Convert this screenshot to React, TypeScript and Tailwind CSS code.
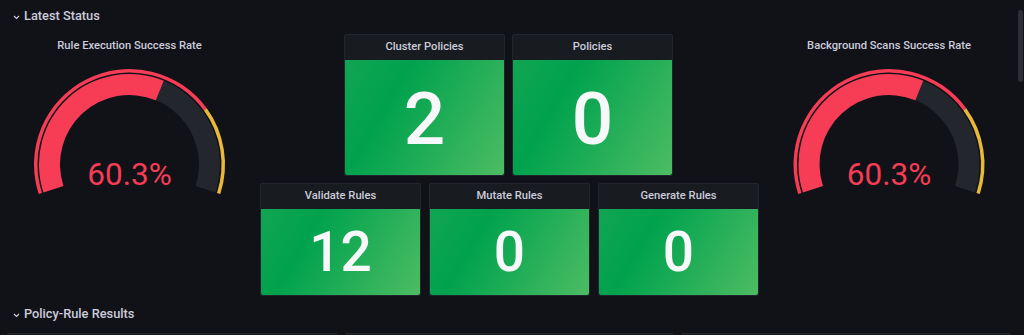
import React from "react";

const RED = "#f73c56";
const YELLOW = "#eab839";
const TRACK = "#23262c";

const polar = (cx: number, cy: number, r: number, deg: number) => {
  const a = (deg * Math.PI) / 180;
  return [cx + r * Math.cos(a), cy - r * Math.sin(a)];
};

// ring segment from angle a0 down to a1 (math degrees, clockwise on screen)
const band = (cx: number, cy: number, r1: number, r2: number, a0: number, a1: number) => {
  const large = a0 - a1 > 180 ? 1 : 0;
  const [x0, y0] = polar(cx, cy, r2, a0);
  const [x1, y1] = polar(cx, cy, r2, a1);
  const [x2, y2] = polar(cx, cy, r1, a1);
  const [x3, y3] = polar(cx, cy, r1, a0);
  return `M${x0} ${y0} A${r2} ${r2} 0 ${large} 1 ${x1} ${y1} L${x2} ${y2} A${r1} ${r1} 0 ${large} 0 ${x3} ${y3}Z`;
};

const START = 198;
const SPAN = 216;
const angleAt = (pct: number) => START - (pct / 100) * SPAN;

const Chevron = () => (
  <svg width="7" height="5" viewBox="0 0 7 5" className="mr-[4px] mt-[2px]">
    <polyline points="1,1 3.5,3.5 6,1" fill="none" stroke="#ccccdc" strokeWidth="1.2" />
  </svg>
);

const RowHeader = ({ title, className }: { title: string; className?: string }) => (
  <div className={`flex items-center pl-[13px] ${className ?? ""}`}>
    <Chevron />
    <span className="text-[12.8px] font-medium text-[#ccccdc]">{title}</span>
  </div>
);

interface GaugeProps {
  title: string;
  value: number;
  width: number;
}

const GaugePanel: React.FC<GaugeProps> = ({ title, value, width }) => {
  const cx = width / 2;
  const cy = 105.5;
  return (
    <div className="flex flex-col shrink-0" style={{ width }}>
      <div className="h-[25px] flex items-center justify-center text-[11.2px] font-medium text-[#ccccdc]">
        {title}
      </div>
      <svg width={width} height={236}>
        <path d={band(cx, cy, 92, 95.5, START, angleAt(75))} fill={RED} />
        <path d={band(cx, cy, 92, 95.5, angleAt(75), START - SPAN)} fill={YELLOW} />
        <path d={band(cx, cy, 69.5, 90.5, START, START - SPAN)} fill={TRACK} />
        <path d={band(cx, cy, 69.5, 90.5, START, angleAt(value))} fill={RED} />
        <text
          x={cx}
          y={126}
          textAnchor="middle"
          fill={RED}
          fontSize="31.5"
          fontFamily="Roboto, sans-serif"
        >
          {value}%
        </text>
      </svg>
    </div>
  );
};

const StatPanel = ({ title, value, big }: { title: string; value: number; big?: boolean }) => (
  <div className="w-[161px] h-full flex flex-col rounded-[2px] border border-[#22252b] bg-[#181b1f] overflow-hidden">
    <div className="h-[25px] shrink-0 flex items-center justify-center text-[11.2px] font-medium text-[#ccccdc]">
      {title}
    </div>
    <div
      className={`flex-1 flex items-center justify-center rounded-b-[2px] bg-[linear-gradient(120deg,#12a553_0%,#00a24e_30%,#4dbc63_100%)] text-[#f7f8fa] font-medium leading-none ${
        big ? "text-[73px] pt-[3px]" : "text-[55px] pt-[1px]"
      }`}
    >
      {value}
    </div>
  </div>
);

export default function App() {
  return (
    <div className="relative w-[1024px] h-[335px] overflow-hidden bg-[#111217] font-['Roboto',sans-serif]">
      <RowHeader title="Latest Status" className="h-[34px] pb-[2px]" />
      <div className="flex h-[262px]">
        <GaugePanel title="Rule Execution Success Rate" value={60.3} width={259} />
        <div className="w-[500px] shrink-0 flex flex-col gap-[7px]">
          <div className="h-[142px] flex gap-[7px] ml-[85px]">
            <StatPanel title="Cluster Policies" value={2} big />
            <StatPanel title="Policies" value={0} big />
          </div>
          <div className="h-[113px] flex gap-[8px] ml-[1px]">
            <StatPanel title="Validate Rules" value={12} />
            <StatPanel title="Mutate Rules" value={0} />
            <StatPanel title="Generate Rules" value={0} />
          </div>
        </div>
        <GaugePanel title="Background Scans Success Rate" value={60.3} width={260} />
      </div>
      <RowHeader title="Policy-Rule Results" className="h-[36px]" />
      <div className="flex gap-[7px] ml-[7px] mt-px">
        <div className="w-[331px] h-[10px] rounded-[2px] border border-[#22252b] bg-[#181b1f]" />
        <div className="w-[329px] h-[10px] rounded-[2px] border border-[#22252b] bg-[#181b1f]" />
        <div className="w-[330px] h-[10px] rounded-[2px] border border-[#22252b] bg-[#181b1f]" />
      </div>
      <div className="absolute right-[1px] top-[10px] w-[5px] h-[72px] rounded-full bg-[#2c2f35]" />
    </div>
  );
}
